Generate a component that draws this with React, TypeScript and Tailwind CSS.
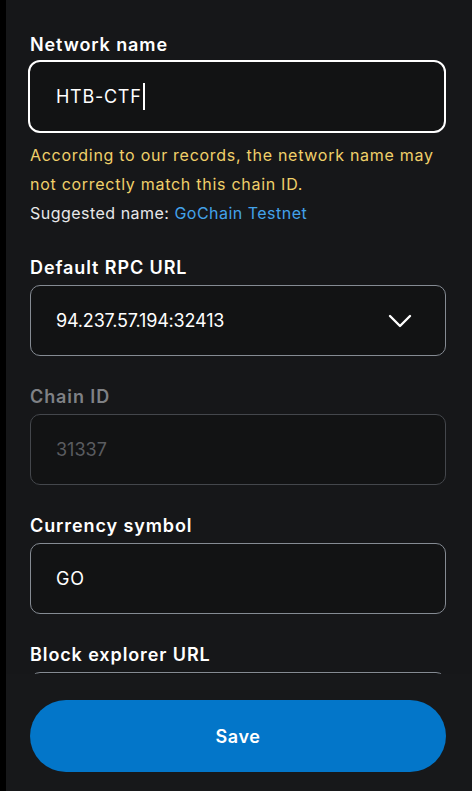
import React from "react";

const font = { fontFamily: "Inter, 'Noto Sans', sans-serif" };

function Label({ children, muted }: { children: React.ReactNode; muted?: boolean }) {
  return (
    <div className={`text-[18px] font-semibold leading-[24px] tracking-[0.05em] ${muted ? "text-[#7f8185]" : "text-white"}`}>
      {children}
    </div>
  );
}

export default function App() {
  return (
    <div className="flex h-[791px] w-[472px] overflow-hidden bg-[#161719]" style={font}>
      <div className="w-[6px] shrink-0 bg-black" />
      <div className="relative flex flex-1 flex-col">
        <div className="flex-1 overflow-hidden pl-[24px] pr-[26px] pt-[33px]">
          <Label>Network name</Label>
          <div className="mt-[3px] -ml-[2px] flex h-[73px] items-center rounded-[12px] border-2 border-white bg-[#121314] pl-[26px] text-[18px] tracking-[0.04em] text-white">
            HTB-CTF<span className="ml-[1px] inline-block h-[27px] w-[2px] bg-white" />
          </div>
          <div className="mt-[8px] text-[16px] leading-[29px] tracking-[0.045em] text-[#f0d06a]">
            According to our records, the network name may not correctly match this chain ID.
          </div>
          <div className="mt-[2px] text-[16px] leading-[24px] tracking-[0.03em] text-[#e8e8ea]">
            Suggested name: <span className="text-[#43a2ea]">GoChain Testnet</span>
          </div>

          <div className="mt-[31px]">
            <Label>Default RPC URL</Label>
          </div>
          <div className="mt-[5px] flex h-[71px] items-center justify-between rounded-[10px] border border-[#858b93] bg-[#121314] pl-[25px] pr-[33px] text-[18px] tracking-[-0.01em] text-white">
            <span>94.237.57.194:32413</span>
            <svg width="24" height="14" viewBox="0 0 24 14" fill="none">
              <path d="M2 2l10 10 10-10" stroke="white" strokeWidth="2.4" strokeLinecap="round" strokeLinejoin="round" />
            </svg>
          </div>

          <div className="mt-[29px]">
            <Label muted>Chain ID</Label>
          </div>
          <div className="mt-[5px] flex h-[71px] items-center rounded-[10px] border border-[#44474c] bg-[#121314] pl-[25px] text-[18px] text-[#5a5c60]">
            31337
          </div>

          <div className="mt-[29px]">
            <Label>Currency symbol</Label>
          </div>
          <div className="mt-[5px] flex h-[71px] items-center rounded-[10px] border border-[#858b93] bg-[#121314] pl-[25px] text-[18px] tracking-[0.04em] text-white">
            GO
          </div>

          <div className="mt-[29px]">
            <Label>Block explorer URL</Label>
          </div>
          <div className="mt-[5px] flex h-[71px] items-center rounded-[10px] border border-[#858b93] bg-[#121314] pl-[25px] text-[18px] text-white" />
        </div>
        <div className="absolute bottom-0 left-0 right-0 h-[117px] bg-[#17181a] pl-[24px] pr-[26px] pt-[26px]">
          <div className="flex h-[72px] items-center justify-center rounded-full bg-[#0376c9] text-[18px] font-semibold tracking-[0.03em] text-white">
            Save
          </div>
        </div>
      </div>
    </div>
  );
}
